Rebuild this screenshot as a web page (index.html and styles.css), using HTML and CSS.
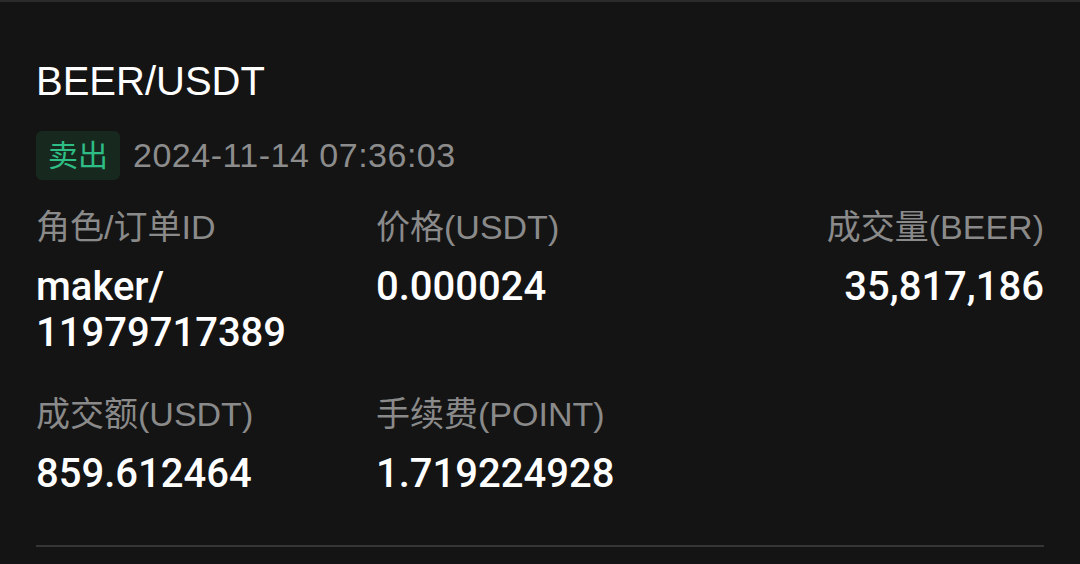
FILE: index.html
```html
<!DOCTYPE html>
<html lang="zh-CN">
<head>
  <meta charset="UTF-8">
  <meta name="viewport" content="width=device-width, initial-scale=1.0">
  <title>成交明细</title>
  <link rel="stylesheet" href="styles.css">
</head>
<body>
  <div class="trade">
    <h1 class="pair">BEER/USDT</h1>
    <div class="meta">
      <span class="side sell">卖出</span>
      <span class="time">2024-11-14 07:36:03</span>
    </div>
    <div class="fields">
      <div class="field">
        <div class="label">角色/订单ID</div>
        <div class="value">maker/<br>11979717389</div>
      </div>
      <div class="field">
        <div class="label">价格(USDT)</div>
        <div class="value">0.000024</div>
      </div>
      <div class="field right">
        <div class="label">成交量(BEER)</div>
        <div class="value">35,817,186</div>
      </div>
      <div class="field">
        <div class="label">成交额(USDT)</div>
        <div class="value">859.612464</div>
      </div>
      <div class="field">
        <div class="label">手续费(POINT)</div>
        <div class="value">1.719224928</div>
      </div>
    </div>
  </div>
</body>
</html>
```

FILE: styles.css
```css
body {
  margin: 0;
  background-color: #141414;
  border-top: 2px solid #2b2b2b;
  color: #fff;
  font-family: "Liberation Sans", "Noto Sans CJK SC", sans-serif;
}
.trade {
  padding: 55px 36px 0;
}
.pair {
  margin: 0;
  font-size: 40px;
  line-height: 48px;
  font-weight: normal;
}
.meta {
  display: flex;
  align-items: center;
  gap: 13px;
  margin-top: 26px;
}
.side {
  height: 49px;
  line-height: 49px;
  padding: 0 12px;
  border-radius: 6px;
  font-size: 30px;
}
.sell {
  background-color: #17291f;
  color: #2ebd85;
}
.time {
  font-size: 34px;
  letter-spacing: 0.5px;
  color: #8c8c8c;
}
.fields {
  display: grid;
  grid-template-columns: 340px 1fr auto;
  row-gap: 36px;
  margin-top: 25px;
  padding-bottom: 48px;
  border-bottom: 2px solid #363636;
}
.field.right {
  text-align: right;
}
.label {
  font-size: 34px;
  line-height: 44px;
  color: #8a8a8a;
}
.value {
  margin-top: 15px;
  font-family: Roboto, "Liberation Sans", sans-serif;
  font-size: 40px;
  line-height: 46px;
  font-weight: 500;
}
```
